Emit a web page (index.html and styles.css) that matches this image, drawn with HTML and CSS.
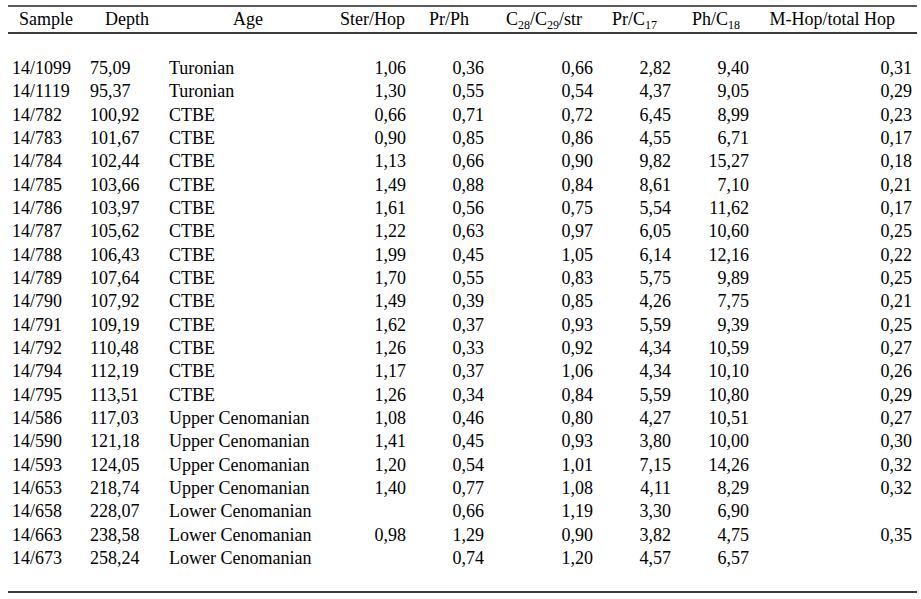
FILE: index.html
```html
<!DOCTYPE html>
<html>
<head>
<meta charset="utf-8">
<link rel="stylesheet" href="styles.css">
</head>
<body>
<div class="wrap">
<table class="data">
<colgroup>
<col class="w1"><col class="w2"><col class="w3"><col class="w4"><col class="w5"><col class="w6"><col class="w7"><col class="w8"><col class="w9">
</colgroup>
<thead>
<tr>
<th class="h1">Sample</th>
<th class="h2">Depth</th>
<th class="h3">Age</th>
<th class="h4">Ster/Hop</th>
<th class="h5">Pr/Ph</th>
<th class="h6">C<sub>28</sub>/C<sub>29</sub>/str</th>
<th class="h7">Pr/C<sub>17</sub></th>
<th class="h8">Ph/C<sub>18</sub></th>
<th class="h9">M-Hop/total Hop</th>
</tr>
</thead>
<tbody>
<tr class="first"><td>14/1099</td><td>75,09</td><td>Turonian</td><td>1,06</td><td>0,36</td><td>0,66</td><td>2,82</td><td>9,40</td><td>0,31</td></tr>
<tr><td>14/1119</td><td>95,37</td><td>Turonian</td><td>1,30</td><td>0,55</td><td>0,54</td><td>4,37</td><td>9,05</td><td>0,29</td></tr>
<tr><td>14/782</td><td>100,92</td><td>CTBE</td><td>0,66</td><td>0,71</td><td>0,72</td><td>6,45</td><td>8,99</td><td>0,23</td></tr>
<tr><td>14/783</td><td>101,67</td><td>CTBE</td><td>0,90</td><td>0,85</td><td>0,86</td><td>4,55</td><td>6,71</td><td>0,17</td></tr>
<tr><td>14/784</td><td>102,44</td><td>CTBE</td><td>1,13</td><td>0,66</td><td>0,90</td><td>9,82</td><td>15,27</td><td>0,18</td></tr>
<tr><td>14/785</td><td>103,66</td><td>CTBE</td><td>1,49</td><td>0,88</td><td>0,84</td><td>8,61</td><td>7,10</td><td>0,21</td></tr>
<tr><td>14/786</td><td>103,97</td><td>CTBE</td><td>1,61</td><td>0,56</td><td>0,75</td><td>5,54</td><td>11,62</td><td>0,17</td></tr>
<tr><td>14/787</td><td>105,62</td><td>CTBE</td><td>1,22</td><td>0,63</td><td>0,97</td><td>6,05</td><td>10,60</td><td>0,25</td></tr>
<tr><td>14/788</td><td>106,43</td><td>CTBE</td><td>1,99</td><td>0,45</td><td>1,05</td><td>6,14</td><td>12,16</td><td>0,22</td></tr>
<tr><td>14/789</td><td>107,64</td><td>CTBE</td><td>1,70</td><td>0,55</td><td>0,83</td><td>5,75</td><td>9,89</td><td>0,25</td></tr>
<tr><td>14/790</td><td>107,92</td><td>CTBE</td><td>1,49</td><td>0,39</td><td>0,85</td><td>4,26</td><td>7,75</td><td>0,21</td></tr>
<tr><td>14/791</td><td>109,19</td><td>CTBE</td><td>1,62</td><td>0,37</td><td>0,93</td><td>5,59</td><td>9,39</td><td>0,25</td></tr>
<tr><td>14/792</td><td>110,48</td><td>CTBE</td><td>1,26</td><td>0,33</td><td>0,92</td><td>4,34</td><td>10,59</td><td>0,27</td></tr>
<tr><td>14/794</td><td>112,19</td><td>CTBE</td><td>1,17</td><td>0,37</td><td>1,06</td><td>4,34</td><td>10,10</td><td>0,26</td></tr>
<tr><td>14/795</td><td>113,51</td><td>CTBE</td><td>1,26</td><td>0,34</td><td>0,84</td><td>5,59</td><td>10,80</td><td>0,29</td></tr>
<tr><td>14/586</td><td>117,03</td><td>Upper Cenomanian</td><td>1,08</td><td>0,46</td><td>0,80</td><td>4,27</td><td>10,51</td><td>0,27</td></tr>
<tr><td>14/590</td><td>121,18</td><td>Upper Cenomanian</td><td>1,41</td><td>0,45</td><td>0,93</td><td>3,80</td><td>10,00</td><td>0,30</td></tr>
<tr><td>14/593</td><td>124,05</td><td>Upper Cenomanian</td><td>1,20</td><td>0,54</td><td>1,01</td><td>7,15</td><td>14,26</td><td>0,32</td></tr>
<tr><td>14/653</td><td>218,74</td><td>Upper Cenomanian</td><td>1,40</td><td>0,77</td><td>1,08</td><td>4,11</td><td>8,29</td><td>0,32</td></tr>
<tr><td>14/658</td><td>228,07</td><td>Lower Cenomanian</td><td></td><td>0,66</td><td>1,19</td><td>3,30</td><td>6,90</td><td></td></tr>
<tr><td>14/663</td><td>238,58</td><td>Lower Cenomanian</td><td>0,98</td><td>1,29</td><td>0,90</td><td>3,82</td><td>4,75</td><td>0,35</td></tr>
<tr class="last"><td>14/673</td><td>258,24</td><td>Lower Cenomanian</td><td></td><td>0,74</td><td>1,20</td><td>4,57</td><td>6,57</td><td></td></tr>
</tbody>
</table>
</div>
</body>
</html>
```

FILE: styles.css
```css
html, body {
  margin: 0;
  padding: 0;
  background: #ffffff;
}

.wrap {
  padding: 5px 0 0 8px;
}

.data {
  width: 909px;
  table-layout: fixed;
  border-collapse: collapse;
  font-family: "Liberation Serif", "Times New Roman", serif;
  font-size: 18px;
  color: #000;
  border-top: 2px solid #5a5a5a;
  border-bottom: 2px solid #3c3c3c;
}

.w1 { width: 80px; }
.w2 { width: 77px; }
.w3 { width: 175px; }
.w4 { width: 68px; }
.w5 { width: 78px; }
.w6 { width: 109px; }
.w7 { width: 78px; }
.w8 { width: 78px; }
.w9 { width: 166px; }

.data th {
  font-weight: normal;
  height: 25px;
  line-height: 25px;
  padding: 0;
  white-space: nowrap;
  border-bottom: 2px solid #3a3a3a;
}

.data sub {
  font-size: 12px;
  line-height: 0;
  vertical-align: -4px;
}

.h1 { text-align: left; padding-left: 11px !important; }
.h2 { text-align: left; padding-left: 17px !important; }
.h3 { text-align: left; padding-left: 68px !important; }
.h4 { text-align: right; padding-right: 5px !important; }
.h5 { text-align: right; padding-right: 17px !important; }
.h6 { text-align: right; padding-right: 13px !important; }
.h7 { text-align: right; padding-right: 16px !important; }
.h8 { text-align: right; padding-right: 11px !important; }
.h9 { text-align: right; padding-right: 22px !important; }

.data td {
  height: 23.33px;
  line-height: 23.33px;
  padding: 0 2px 0 0;
  text-align: right;
  white-space: nowrap;
}

.data td:nth-child(1) { text-align: left; padding-left: 4px; }
.data td:nth-child(2) { text-align: left; padding-left: 2px; }
.data td:nth-child(3) { text-align: left; padding-left: 4px; }
.data td:nth-child(9) { padding-right: 5px; }

.data tr.first td { padding-top: 23px; }
.data tr.last td { padding-bottom: 21px; }
```
